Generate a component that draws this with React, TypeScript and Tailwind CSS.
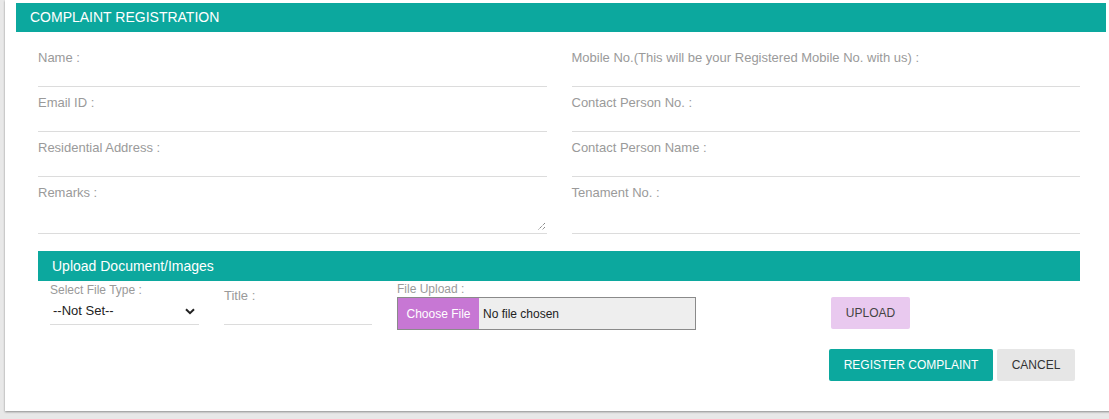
import React, { useState } from 'react';

const teal = 'bg-[#0ca89e]';

const Field: React.FC<{ label: string }> = ({ label }) => (
  <div className="h-[45px] border-b border-[#dcdcdc] pt-[9px]">
    <label className="block text-[13px] leading-[14px] text-[#9a9a9a]">{label}</label>
  </div>
);

const App: React.FC = () => {
  const [fileType, setFileType] = useState('');

  return (
    <div className="min-h-screen bg-[#e8e8e8] pl-[5px] overflow-hidden" style={{ fontFamily: '"Liberation Sans", Arial, sans-serif' }}>
      <div className="w-[1110px] bg-white pt-[3px] pb-[30px] shadow-[0_1px_2px_rgba(0,0,0,0.4)]">
        <div className={`ml-[11px] mr-[9px] h-[29px] ${teal} pl-[14px] flex items-center text-[14px] text-white`}>
          COMPLAINT REGISTRATION
        </div>

        <div className="pl-[33px] pr-[35px]">
          <div className="mt-[10px] grid grid-cols-2 gap-x-[25px]">
            <div>
              <Field label="Name :" />
              <Field label="Email ID :" />
              <Field label="Residential Address :" />
              <div className="relative h-[57px] border-b border-[#dcdcdc] pt-[9px]">
                <label className="block text-[13px] leading-[14px] text-[#9a9a9a]">Remarks :</label>
                <svg className="absolute right-[1px] bottom-[2px]" width="9" height="9" viewBox="0 0 9 9">
                  <path d="M8 1L1 8M8 5L5 8" stroke="#555" strokeWidth="1" strokeDasharray="1 1" />
                </svg>
              </div>
            </div>
            <div>
              <Field label="Mobile No.(This will be your Registered Mobile No. with us) :" />
              <Field label="Contact Person No. :" />
              <Field label="Contact Person Name :" />
              <div className="h-[57px] border-b border-[#dcdcdc] pt-[9px]">
                <label className="block text-[13px] leading-[14px] text-[#9a9a9a]">Tenament No. :</label>
              </div>
            </div>
          </div>

          <div className={`mt-[17px] h-[30px] ${teal} pl-[14px] flex items-center text-[14px] text-white`}>
            Upload Document/Images
          </div>

          <div className="flex items-start pl-[12px]">
            <div className="w-[149px] pt-[2px]">
              <label className="block text-[12px] leading-[14px] text-[#9a9a9a]">Select File Type :</label>
              <div className="relative h-[28px] border-b border-[#dcdcdc]">
                <select
                  value={fileType}
                  onChange={(e) => setFileType(e.target.value)}
                  className="h-full w-full appearance-none bg-transparent pl-[3px] pt-[1px] text-[13px] text-[#222] outline-none"
                >
                  <option value="">--Not Set--</option>
                </select>
                <svg className="pointer-events-none absolute right-[4px] top-[11px]" width="10" height="7" viewBox="0 0 10 7">
                  <path d="M1 1.2L5 5.2L9 1.2" fill="none" stroke="#222" strokeWidth="2" />
                </svg>
              </div>
            </div>

            <div className="ml-[25px] w-[148px] pt-[8px]">
              <label className="block text-[13px] leading-[14px] text-[#9a9a9a]">Title :</label>
              <div className="h-[22px] border-b border-[#dcdcdc]" />
            </div>

            <div className="ml-[25px] w-[299px] pt-[1px]">
              <label className="block text-[12px] leading-[14px] text-[#9a9a9a]">File Upload :</label>
              <div className="mt-[1px] flex h-[33px] items-stretch border border-[#8a8a8a] bg-[#eeeeee]">
                <span className="flex w-[81px] items-center justify-center bg-[#c777d4] text-[12px] text-white">Choose File</span>
                <span className="ml-[4px] flex items-center text-[12px] text-[#222]">No file chosen</span>
              </div>
            </div>

            <button className="ml-[135px] mt-[16px] h-[32px] w-[79px] rounded-[2px] bg-[#e9c9ef] text-[12px] text-[#444]">
              UPLOAD
            </button>
          </div>

          <div className="mt-[19px] flex justify-end gap-[4px] pr-[5px]">
            <button className={`h-[32px] w-[164px] rounded-[2px] ${teal} text-[12px] text-white`}>REGISTER COMPLAINT</button>
            <button className="h-[32px] w-[78px] rounded-[2px] bg-[#e6e6e6] text-[12px] text-[#333]">CANCEL</button>
          </div>
        </div>
      </div>
    </div>
  );
};

export default App;
